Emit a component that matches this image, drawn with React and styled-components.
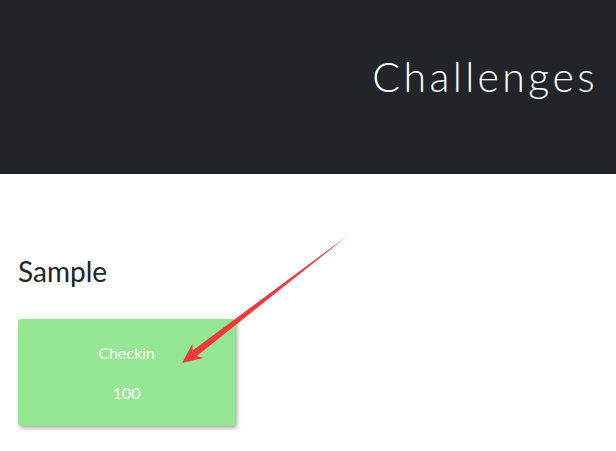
import React from 'react';
import styled, { createGlobalStyle } from 'styled-components';

//---------------------------------------------------------------------

const challenges = [{ name: 'Checkin', points: 100 }];

const App = () => {
  return (
    <Page>
      <GlobalStyle />
      <Header>
        <Title>Challenges</Title>
      </Header>
      <Content>
        <GroupTitle>Sample</GroupTitle>
        <CardGrid>
          {challenges.map(c => (
            <Card key={c.name}>
              <CardName>{c.name}</CardName>
              <CardPoints>{c.points}</CardPoints>
            </Card>
          ))}
        </CardGrid>
      </Content>

      {/* annotation arrow drawn over the page */}
      <Arrow width="616" height="451" viewBox="0 0 616 451">
        <defs>
          <linearGradient id="fade" x1="351" y1="233" x2="182" y2="363" gradientUnits="userSpaceOnUse">
            <stop offset="0" stopColor="#f03a3a" stopOpacity="0.2" />
            <stop offset="0.12" stopColor="#f03a3a" stopOpacity="1" />
            <stop offset="1" stopColor="#f03a3a" stopOpacity="1" />
          </linearGradient>
        </defs>
        <polygon
          points="182,363 192.4,343.7 192.6,350.4 351,233 196.8,356 203.4,357.9"
          fill="url(#fade)"
        />
      </Arrow>
    </Page>
  );
};

export default App;

//---------------------------------------------------------------------

const GlobalStyle = createGlobalStyle`
  html, body {
    margin: 0;
    padding: 0;
    background: #fff;
    font-family: Lato, "Noto Sans", sans-serif;
  }
`;

const Page = styled.div`
  position: relative;
  width: 616px;
  min-height: 451px;
`;

const Header = styled.header`
  height: 174px;
  background: #212529;
  display: flex;
  align-items: center;
  justify-content: flex-end;
  padding: 0 18px 22px 0;
  box-sizing: border-box;
`;

const Title = styled.h1`
  margin: 0;
  color: #fff;
  font-family: Lato, sans-serif;
  font-weight: 300;
  font-size: 41px;
  letter-spacing: 3.4px;
`;

const Content = styled.main`
  padding: 79px 18px 0;
`;

const GroupTitle = styled.h2`
  margin: 0 0 30px;
  color: #212529;
  font-weight: 400;
  font-size: 28px;
  line-height: 36px;
`;

const CardGrid = styled.div`
  display: flex;
  gap: 16px;
`;

const Card = styled.div`
  width: 217px;
  height: 107px;
  background: #94e693;
  border-radius: 3px;
  box-shadow: 2px 2px 4px rgba(0, 0, 0, 0.35);
  display: flex;
  flex-direction: column;
  align-items: center;
  justify-content: center;
  gap: 20px;
  color: #fff;
  font-size: 16px;
`;

const CardName = styled.div`
  line-height: 20px;
`;

const CardPoints = styled.div`
  line-height: 20px;
`;

const Arrow = styled.svg`
  position: absolute;
  left: 0;
  top: 0;
  pointer-events: none;
`;
